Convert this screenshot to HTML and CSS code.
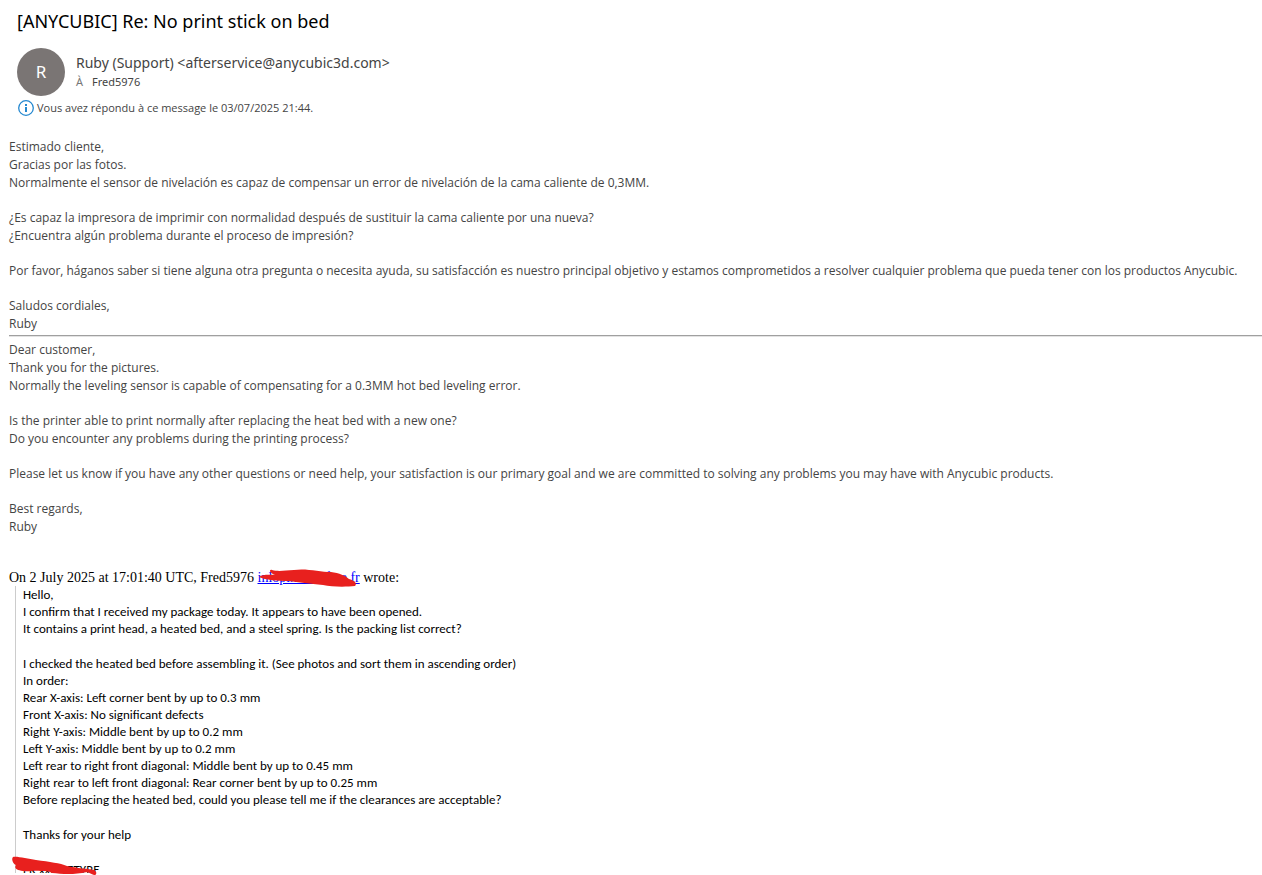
FILE: index.html
```
<!DOCTYPE html>
<html lang="fr">
<head>
    <meta charset="UTF-8">
    <meta name="viewport" content="width=device-width, initial-scale=1.0">
    <title>[ANYCUBIC] Re: No print stick on bed</title>
    <link rel="stylesheet" href="styles.css">
</head>
<body>
    <header class="message-header">
        <h1>[ANYCUBIC] Re: No print stick on bed</h1>
        <div class="sender">
            <div class="avatar">R</div>
            <div class="sender-info">
                <div class="from">Ruby (Support) &lt;afterservice@anycubic3d.com&gt;</div>
                <div class="to"><span class="label">À</span><span>Fred5976</span></div>
            </div>
        </div>
        <div class="notice">
            <svg width="17" height="16" viewBox="0 0 17 16" fill="none" aria-hidden="true">
                <circle cx="9" cy="8" r="7.3" stroke="#2488d0" stroke-width="1.3"/>
                <path d="M8 4h2v2H8zM8 7h2v5H8z" fill="#2488d0"/>
            </svg>
            <span>Vous avez répondu à ce message le 03/07/2025 21:44.</span>
        </div>
    </header>
    <main class="message-body">
        <section class="reply">
            <p>Estimado cliente,<br>Gracias por las fotos.<br>Normalmente el sensor de nivelación es capaz de compensar un error de nivelación de la cama caliente de 0,3MM.</p>
            <p>¿Es capaz la impresora de imprimir con normalidad después de sustituir la cama caliente por una nueva?<br>¿Encuentra algún problema durante el proceso de impresión?</p>
            <p>Por favor, háganos saber si tiene alguna otra pregunta o necesita ayuda, su satisfacción es nuestro principal objetivo y estamos comprometidos a resolver cualquier problema que pueda tener con los productos Anycubic.</p>
            <p>Saludos cordiales,<br>Ruby</p>
        </section>
        <hr>
        <section class="reply">
            <p>Dear customer,<br>Thank you for the pictures.<br>Normally the leveling sensor is capable of compensating for a 0.3MM hot bed leveling error.</p>
            <p>Is the printer able to print normally after replacing the heat bed with a new one?<br>Do you encounter any problems during the printing process?</p>
            <p>Please let us know if you have any other questions or need help, your satisfaction is our primary goal and we are committed to solving any problems you may have with Anycubic products.</p>
            <p>Best regards,<br>Ruby</p>
        </section>
        <section class="quoted">
            <div class="quote-intro">On 2 July 2025 at 17:01:40 UTC, Fred5976 <a class="redacted" href="#">inlopixxxxxfree.fr<svg class="scribble" width="100" height="20" viewBox="0 0 100 20" aria-hidden="true"><path d="M1 9C5 6 12 7 17 7C11 5 11 1 14 2C22 4 27 2 36 2C48 0 62 4 73 4C81 5 88 8 91 11C98 13 99 16 97 18C88 19 74 19 65 17C52 16 40 14 31 13C20 13 7 12 1 9Z" fill="#e8201e"/></svg></a> wrote:</div>
            <blockquote>
                <p>Hello,<br>I confirm that I received my package today. It appears to have been opened.<br>It contains a print head, a heated bed, and a steel spring. Is the packing list correct?</p>
                <p>I checked the heated bed before assembling it. (See photos and sort them in ascending order)<br>In order:<br>Rear X-axis: Left corner bent by up to 0.3 mm<br>Front X-axis: No significant defects<br>Right Y-axis: Middle bent by up to 0.2 mm<br>Left Y-axis: Middle bent by up to 0.2 mm<br>Left rear to right front diagonal: Middle bent by up to 0.45 mm<br>Right rear to left front diagonal: Rear corner bent by up to 0.25 mm<br>Before replacing the heated bed, could you please tell me if the clearances are acceptable?</p>
                <p>Thanks for your help</p>
                <p class="signature"><span class="name">FR xxxxxETYRE</span><svg class="scribble" width="86" height="20" viewBox="0 0 86 20" aria-hidden="true"><path d="M1 1C5 0 16 3 24 4C38 6 48 7 55 10C64 12 78 13 82 14C86 16 84 20 82 19C79 18 78 17 75 16C62 19 50 18 40 17C36 15 34 15 29 15C20 14 18 16 11 15C4 14 2 12 4 9C1 8 -1 3 1 1Z" fill="#e8201e"/></svg></p>
            </blockquote>
        </section>
    </main>
</body>
</html>
```
FILE: styles.css
```
* {
    box-sizing: border-box;
    margin: 0;
    padding: 0;
}

body {
    font-family: "Noto Sans", sans-serif;
    color: #444;
    background-color: #fff;
}

.message-header {
    padding: 9px 17px 0;
}

h1 {
    font-size: 18px;
    font-weight: 400;
    line-height: 24px;
    color: #000;
}

.sender {
    display: flex;
    gap: 11px;
    margin-top: 15px;
}

.avatar {
    width: 48px;
    height: 48px;
    border-radius: 50%;
    background-color: #7a7574;
    color: #fff;
    font-size: 17px;
    line-height: 48px;
    text-align: center;
}

.sender-info {
    padding-top: 4px;
}

.from {
    font-size: 14px;
    line-height: 21px;
}

.to {
    display: flex;
    gap: 9px;
    font-size: 11px;
    line-height: 18px;
}

.to .label {
    color: #777;
}

.notice {
    display: flex;
    align-items: center;
    gap: 3px;
    margin-top: 4px;
    font-family: "Open Sans", sans-serif;
    font-size: 11px;
    line-height: 16px;
}

.message-body {
    padding: 22px 0 0 9px;
}

.reply {
    font-family: "Open Sans", sans-serif;
    font-size: 12px;
    line-height: 18px;
}

.reply p + p {
    margin-top: 17px;
}

hr {
    height: 2px;
    margin: 2px 0 4px;
    border: none;
    border-top: 1px solid #a0a0a0;
    border-bottom: 1px solid #e3e3e3;
}

.quoted {
    margin-top: 33px;
    padding-bottom: 3px;
    color: #000;
}

.quote-intro {
    font-family: "Liberation Serif", serif;
    font-size: 14px;
    line-height: 17px;
}

.quote-intro a {
    color: #00f;
}

.redacted,
.signature {
    position: relative;
}

.scribble {
    position: absolute;
    top: -2px;
    left: 0;
}

blockquote {
    margin-left: 6px;
    padding-left: 7px;
    border-left: 1px solid #ccc;
    font-family: Calibri, Carlito, Lato, sans-serif;
    font-size: 13px;
    line-height: 17px;
}

blockquote p + p {
    margin-top: 18px;
}

/* the message is cut off in the middle of this line */
.signature .name {
    display: block;
    height: 12px;
    overflow: hidden;
}

.signature .scribble {
    top: -5px;
    left: -11px;
}
```
